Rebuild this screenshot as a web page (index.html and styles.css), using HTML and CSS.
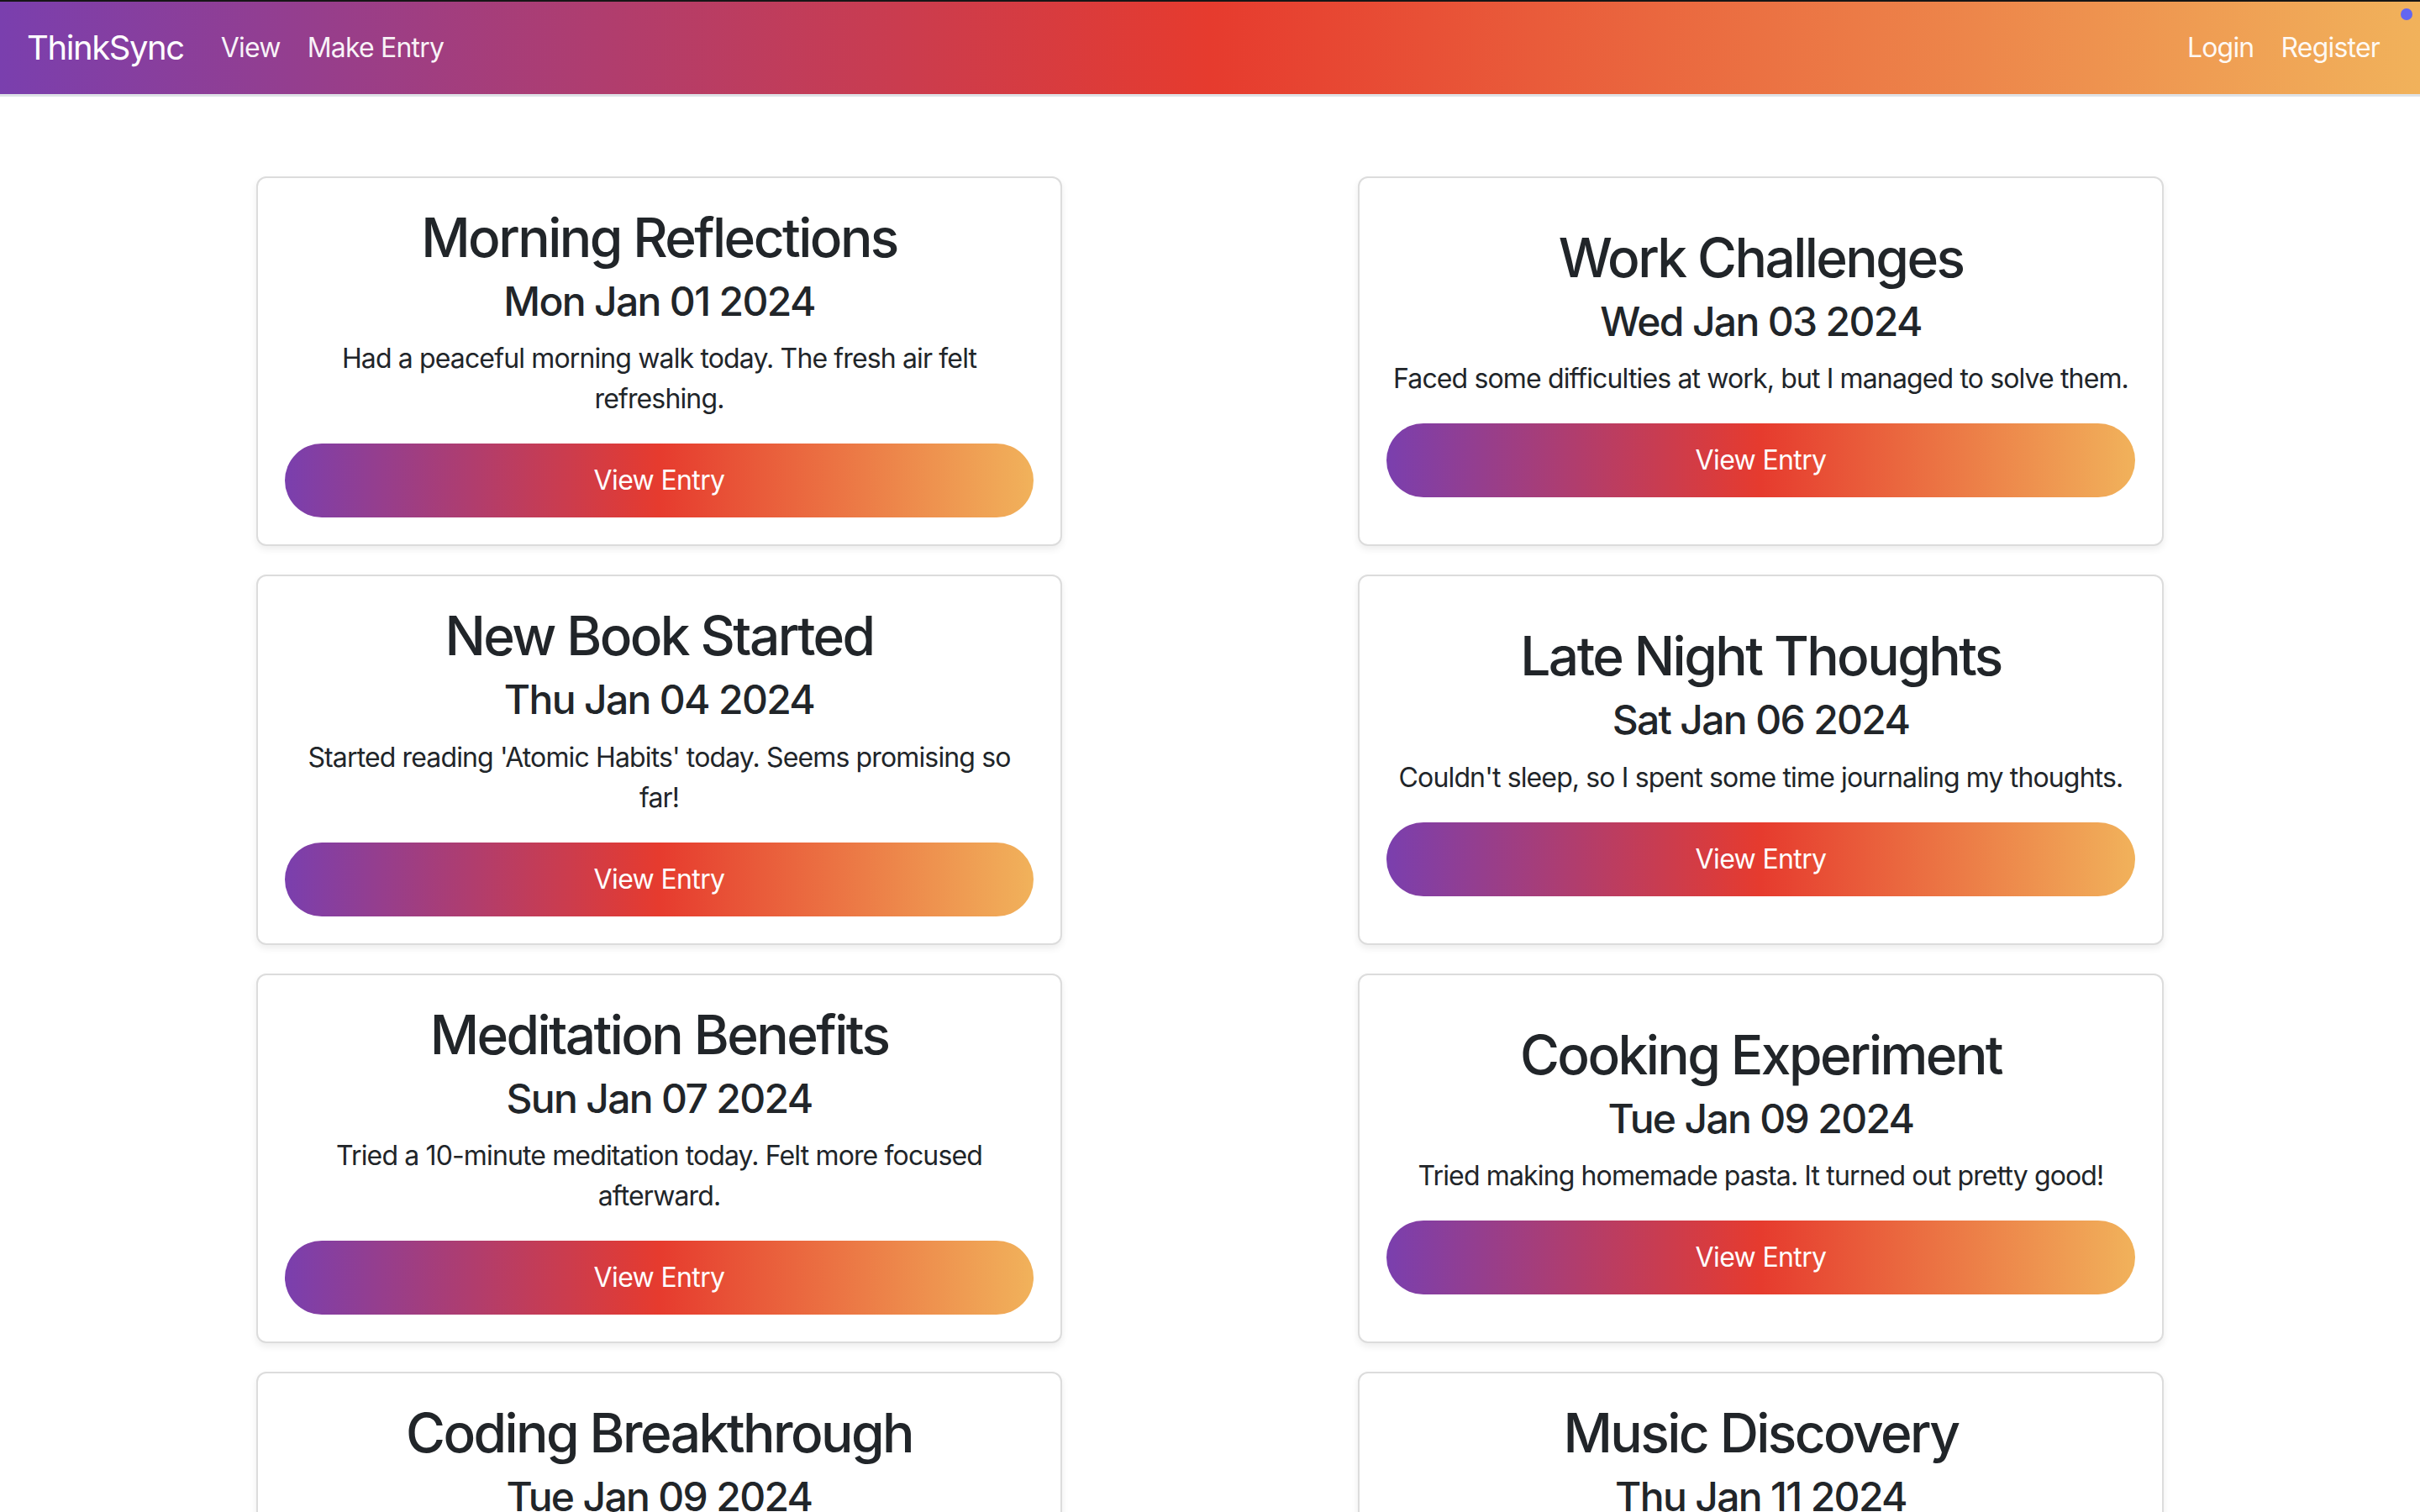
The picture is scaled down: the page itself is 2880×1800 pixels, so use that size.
FILE: index.html
```html
<!DOCTYPE html>
<html lang="en">
<head>
<meta charset="utf-8">
<title>ThinkSync</title>
<link rel="stylesheet" href="styles.css">
</head>
<body>
<nav class="navbar">
  <div class="nav-left">
    <a class="brand" href="#">ThinkSync</a>
    <a class="nav-link" href="#">View</a>
    <a class="nav-link" href="#">Make Entry</a>
  </div>
  <div class="nav-right">
    <a class="nav-link" href="#">Login</a>
    <a class="nav-link" href="#">Register</a>
  </div>
  <span class="status-dot"></span>
</nav>

<main class="entries">
  <div class="card">
    <div class="card-body">
      <h2 class="card-title">Morning Reflections</h2>
      <h4 class="card-date">Mon Jan 01 2024</h4>
      <p class="card-text">Had a peaceful morning walk today. The fresh air felt refreshing.</p>
      <a class="btn-entry" href="#">View Entry</a>
    </div>
  </div>
  <div class="card">
    <div class="card-body">
      <h2 class="card-title">Work Challenges</h2>
      <h4 class="card-date">Wed Jan 03 2024</h4>
      <p class="card-text">Faced some difficulties at work, but I managed to solve them.</p>
      <a class="btn-entry" href="#">View Entry</a>
    </div>
  </div>
  <div class="card">
    <div class="card-body">
      <h2 class="card-title">New Book Started</h2>
      <h4 class="card-date">Thu Jan 04 2024</h4>
      <p class="card-text">Started reading 'Atomic Habits' today. Seems promising so far!</p>
      <a class="btn-entry" href="#">View Entry</a>
    </div>
  </div>
  <div class="card">
    <div class="card-body">
      <h2 class="card-title">Late Night Thoughts</h2>
      <h4 class="card-date">Sat Jan 06 2024</h4>
      <p class="card-text">Couldn't sleep, so I spent some time journaling my thoughts.</p>
      <a class="btn-entry" href="#">View Entry</a>
    </div>
  </div>
  <div class="card">
    <div class="card-body">
      <h2 class="card-title">Meditation Benefits</h2>
      <h4 class="card-date">Sun Jan 07 2024</h4>
      <p class="card-text">Tried a 10-minute meditation today. Felt more focused afterward.</p>
      <a class="btn-entry" href="#">View Entry</a>
    </div>
  </div>
  <div class="card">
    <div class="card-body">
      <h2 class="card-title">Cooking Experiment</h2>
      <h4 class="card-date">Tue Jan 09 2024</h4>
      <p class="card-text">Tried making homemade pasta. It turned out pretty good!</p>
      <a class="btn-entry" href="#">View Entry</a>
    </div>
  </div>
  <div class="card">
    <div class="card-body">
      <h2 class="card-title">Coding Breakthrough</h2>
      <h4 class="card-date">Tue Jan 09 2024</h4>
      <p class="card-text">Finally fixed the bug that had been bothering me for days. Feels great!</p>
      <a class="btn-entry" href="#">View Entry</a>
    </div>
  </div>
  <div class="card">
    <div class="card-body">
      <h2 class="card-title">Music Discovery</h2>
      <h4 class="card-date">Thu Jan 11 2024</h4>
      <p class="card-text">Found a new band today and listened to their whole album twice.</p>
      <a class="btn-entry" href="#">View Entry</a>
    </div>
  </div>
</main>
</body>
</html>
```

FILE: styles.css
```css
* {
  box-sizing: border-box;
}

html, body {
  margin: 0;
  padding: 0;
  background: #ffffff;
}

body {
  font-family: Inter, "Noto Sans", "Liberation Sans", sans-serif;
  font-size: 32px;
  line-height: 1.5;
  color: #212529;
}

a {
  text-decoration: none;
}

.navbar {
  position: relative;
  display: flex;
  align-items: center;
  justify-content: space-between;
  height: 115px;
  padding: 0 32px;
  border-top: 2px solid #161616;
  border-bottom: 3px solid #dee2e6;
  background: linear-gradient(90deg, #7a3fae 0%, #e63b2e 50%, #f1b25b 100%);
}

.nav-left,
.nav-right {
  display: flex;
  align-items: center;
}

.brand {
  color: #ffffff;
  font-size: 40px;
  line-height: 60px;
  letter-spacing: -0.035em;
  margin-right: 28px;
}

.nav-link {
  color: rgba(255, 255, 255, 0.95);
  font-size: 32px;
  line-height: 48px;
  letter-spacing: -0.025em;
  padding: 16px;
}

.status-dot {
  position: absolute;
  top: 8px;
  right: 9px;
  width: 14px;
  height: 14px;
  border-radius: 50%;
  background: #6366f1;
}

.entries {
  display: grid;
  grid-template-columns: 959px 959px;
  column-gap: 352px;
  row-gap: 34px;
  justify-content: center;
  padding-top: 95px;
  padding-bottom: 96px;
}

.card {
  display: flex;
  flex-direction: column;
  justify-content: center;
  background: #ffffff;
  border: 2px solid #dcdcdc;
  border-radius: 12px;
  box-shadow: 0 4px 8px rgba(0, 0, 0, 0.075);
}

.card-body {
  display: flex;
  flex-direction: column;
  align-items: stretch;
  padding: 33px 32px 32px;
  text-align: center;
}

.card-title {
  margin: 0 0 8px;
  font-size: 64px;
  font-weight: 500;
  line-height: 1.2;
  letter-spacing: -0.04em;
}

.card-date {
  margin: 0 0 16px;
  font-size: 48px;
  font-weight: 500;
  line-height: 1.2;
  letter-spacing: -0.035em;
}

.card-text {
  margin: 0 0 29px;
  font-size: 32px;
  line-height: 48px;
  letter-spacing: -0.027em;
}

.btn-entry {
  display: block;
  padding: 20px 24px;
  border-radius: 60px;
  color: #ffffff;
  font-size: 32px;
  line-height: 48px;
  letter-spacing: -0.02em;
  text-align: center;
  background: linear-gradient(90deg, #7a3fae 0%, #e63b2e 50%, #f1b25b 100%);
}
```
